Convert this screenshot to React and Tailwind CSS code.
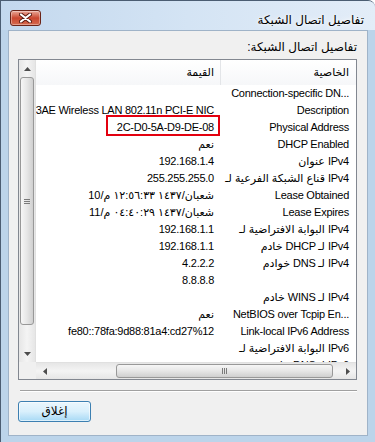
import React from 'react';

const font = "font-['Liberation_Sans','DejaVu_Sans',sans-serif]";

// property / value pairs, as shown in the list (rendered LTR like the original control)
const rows = [
  ['Connection-specific DN...', ''],
  ['Description', 'Realtek RTL8723AE Wireless LAN 802.11n PCI-E NIC'],
  ['Physical Address', '2C-D0-5A-D9-DE-08'],
  ['DHCP Enabled', 'نعم'],
  ['عنوان IPv4', '192.168.1.4'],
  ['قناع الشبكة الفرعية لـ IPv4', '255.255.255.0'],
  ['Lease Obtained', '10/شعبان/١٤٣٧ ١٢:٥٦:٣٣ م'],
  ['Lease Expires', '11/شعبان/١٤٣٧ ٠٤:٤٠:٢٩ م'],
  ['البوابة الافتراضية لـ IPv4', '192.168.1.1'],
  ['خادم DHCP لـ IPv4', '192.168.1.1'],
  ['خوادم DNS لـ IPv4', '4.2.2.2'],
  ['', '8.8.8.8'],
  ['خادم WINS لـ IPv4', ''],
  ['NetBIOS over Tcpip En...', 'نعم'],
  ['Link-local IPv6 Address', 'fe80::78fa:9d88:81a4:cd27%12'],
  ['البوابة الافتراضية لـ IPv6', ''],
  ['خادم DNS لـ IPv6', ''],
];

const Arrow = ({ dir }) => {
  const pts = {
    up: '0,4 3.5,0 7,4',
    down: '0,0 7,0 3.5,4',
    left: '4,0 4,7 0,3.5',
    right: '0,0 0,7 4,3.5',
  }[dir];
  const w = dir === 'up' || dir === 'down' ? 7 : 4;
  const h = dir === 'up' || dir === 'down' ? 4 : 7;
  return (
    <svg width={w} height={h} viewBox={`0 0 ${w} ${h}`}>
      <polygon points={pts} fill="#4d4d4d" />
    </svg>
  );
};

const Row = ({ prop, value }) => (
  <div className="flex h-[17px] items-center shrink-0">
    <div className="w-[184px] shrink-0 flex justify-end pr-[6px] overflow-hidden">
      <span dir="ltr" className="whitespace-nowrap shrink-0">{value}</span>
    </div>
    <div className="w-[136px] shrink-0 flex justify-end pr-[7px] overflow-hidden">
      <span dir="ltr" className="whitespace-nowrap shrink-0">{prop}</span>
    </div>
  </div>
);

export default function App() {
  return (
    <div className={`w-[375px] h-[442px] overflow-hidden bg-[#bcd4ea] border-l border-t border-[#4b5d72] rounded-tr-[7px] flex flex-col ${font} text-black`}>
      {/* title bar */}
      <div className="h-[29px] shrink-0 flex justify-between bg-gradient-to-r from-[#c3d8ee] via-[#d4e4f4] to-[#e3edf8]">
        <div className="pl-[9px] pt-[9px]">
          <button className="w-[31px] h-[16px] rounded-[3px] border border-[#6b2418] bg-gradient-to-b from-[#e9a899] via-[#c9462f] to-[#d56a4f] flex items-center justify-center shadow-[inset_0_0_0_1px_rgba(255,255,255,0.35)]">
            <svg width="13" height="10" viewBox="0 0 13 10">
              <path d="M2 1.5 L11 8.5 M11 1.5 L2 8.5" stroke="#5a1a10" strokeWidth="4" strokeLinecap="round" />
              <path d="M2 1.5 L11 8.5 M11 1.5 L2 8.5" stroke="#ffffff" strokeWidth="2.2" strokeLinecap="round" />
            </svg>
          </button>
        </div>
        <div dir="rtl" className="mt-[11px] pr-[11px] text-[12px] leading-[16px] [text-shadow:0_0_6px_#ffffff,0_0_3px_#ffffff]">
          تفاصيل اتصال الشبكة
        </div>
      </div>

      {/* client area */}
      <div className="ml-[7px] w-[360px] h-[406px] shrink-0 bg-[#f0f0f0] border border-[#9fb3c8] flex flex-col pl-[9px] pr-[10px]">
        <div dir="rtl" className="pt-[9px] h-[28px] text-[12px] leading-[15px] text-right">
          تفاصيل اتصال الشبكة:
        </div>

        {/* list view */}
        <div className="relative h-[321px] shrink-0 border border-[#828790] bg-white grid grid-cols-[17px_1fr] grid-rows-[1fr_17px] text-[11px] tracking-[-0.25px]">
          {/* vertical scrollbar (left side, RTL) */}
          <div className="flex flex-col bg-gradient-to-r from-[#e6e6e6] via-[#f4f4f4] to-[#e6e6e6] border-r border-[#e0e0e0]">
            <div className="h-[17px] flex items-center justify-center"><Arrow dir="up" /></div>
            <div className="h-[248px] mx-[1px] rounded-[3px] border border-[#989898] bg-gradient-to-r from-[#f6f6f6] via-[#e6e6e6] to-[#cfcfcf] flex flex-col items-center justify-center gap-[1px]">
              <div className="w-[6px] h-[1px] bg-[#7a7a7a]" />
              <div className="w-[6px] h-[1px] bg-[#7a7a7a]" />
              <div className="w-[6px] h-[1px] bg-[#7a7a7a]" />
            </div>
            <div className="flex-1" />
            <div className="h-[17px] flex items-center justify-center"><Arrow dir="down" /></div>
          </div>

          {/* content */}
          <div className="flex flex-col overflow-hidden">
            <div className="h-[25px] shrink-0 flex items-center bg-gradient-to-b from-white to-[#f6f7f9]">
              <div className="w-[184px] h-full flex items-center justify-end pr-[6px]">
                <span dir="rtl">القيمة</span>
              </div>
              <div className="w-[136px] h-full flex items-center justify-end pr-[7px] border-l border-[#e3e5e8]">
                <span dir="rtl">الخاصية</span>
              </div>
            </div>
            {rows.map(([p, v], i) => (
              <Row key={i} prop={p} value={v} />
            ))}
          </div>

          {/* corner */}
          <div className="bg-[#f0f0f0]" />

          {/* horizontal scrollbar */}
          <div className="flex bg-gradient-to-b from-[#e6e6e6] via-[#f4f4f4] to-[#e6e6e6] border-t border-[#e0e0e0]">
            <div className="w-[17px] flex items-center justify-center"><Arrow dir="left" /></div>
            <div className="w-[63px]" />
            <div className="w-[217px] my-[1px] rounded-[3px] border border-[#989898] bg-gradient-to-b from-[#f6f6f6] via-[#e6e6e6] to-[#cfcfcf] flex items-center justify-center gap-[1px]">
              <div className="h-[6px] w-[1px] bg-[#7a7a7a]" />
              <div className="h-[6px] w-[1px] bg-[#7a7a7a]" />
              <div className="h-[6px] w-[1px] bg-[#7a7a7a]" />
            </div>
            <div className="flex-1" />
            <div className="w-[17px] flex items-center justify-center"><Arrow dir="right" /></div>
          </div>

          {/* highlight drawn over the MAC address */}
          <div className="absolute left-[87px] top-[55px] w-[114px] h-[21px] border-2 border-[#e3000f]" />
        </div>

        <div className="mt-[10px] ml-[2px] h-[2px] border-t border-[#a0a0a0] border-b border-b-white" />

        <button className="mt-[9px] w-[73px] h-[21px] rounded-[3px] border border-[#3c7fb1] bg-gradient-to-b from-[#eaf6fd] via-[#d9f0fc] to-[#a7d9f5] shadow-[inset_0_0_0_1px_rgba(255,255,255,0.6)] text-[12px] leading-[19px]" dir="rtl">
          إغلاق
        </button>
      </div>
    </div>
  );
}
